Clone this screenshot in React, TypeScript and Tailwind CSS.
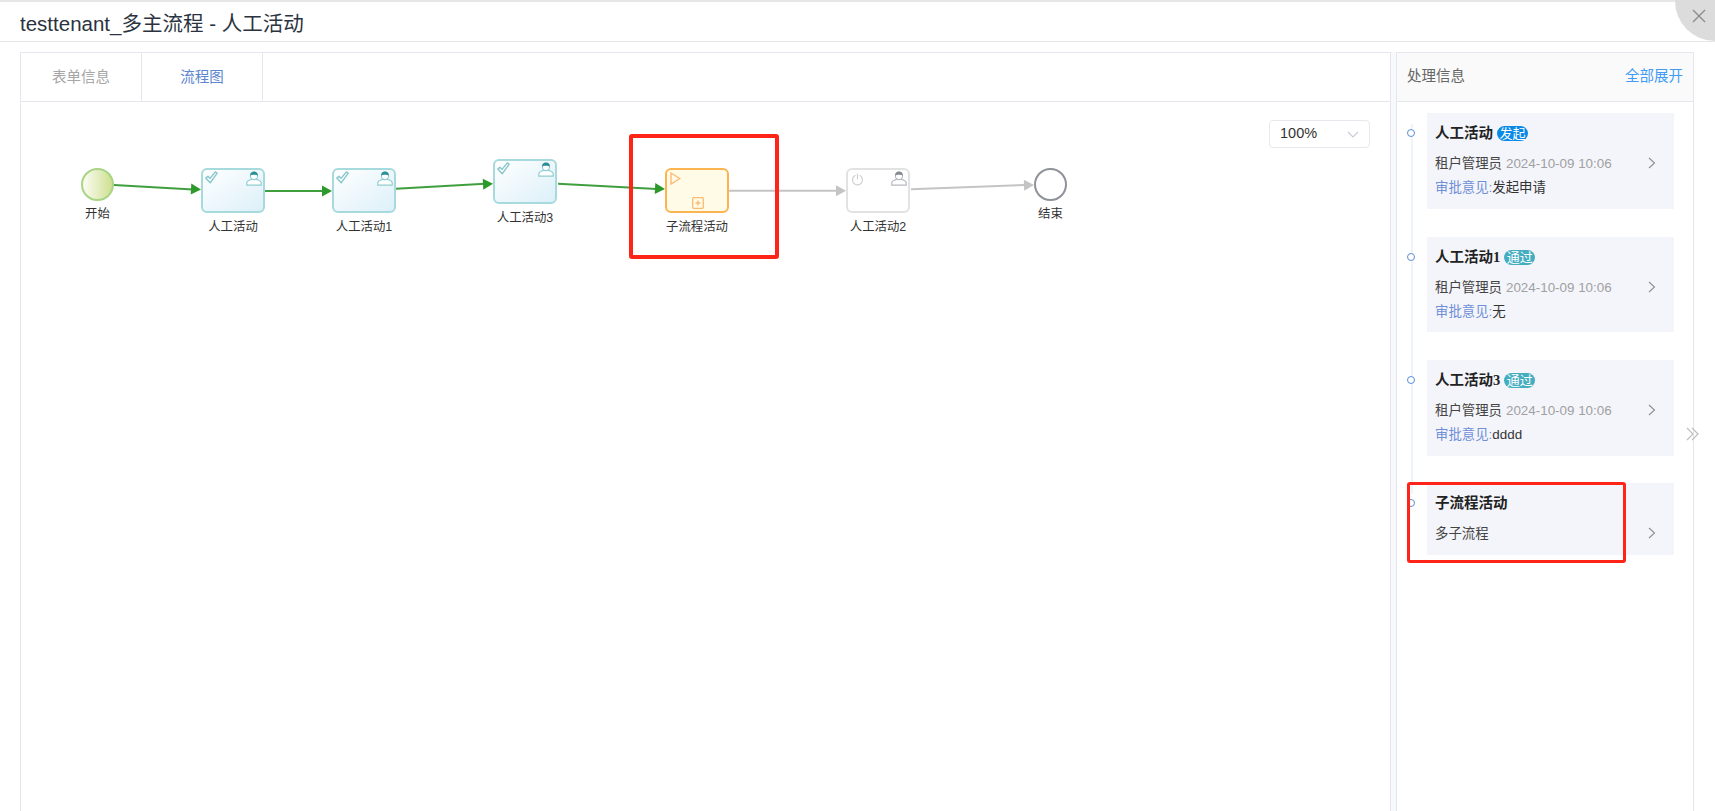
import { ReactNode } from 'react';

const font = { fontFamily: '"Liberation Sans", "Noto Sans CJK SC", sans-serif' };
const titleFont = { fontFamily: '"Liberation Serif", "Noto Sans CJK SC", serif' };

const CheckIcon = () => (
  <svg width="13" height="13" viewBox="0 0 13 13" fill="none" stroke="#86c6ca" strokeWidth="1.4" strokeLinejoin="round">
    <path d="M0.8 7 L3 5.2 L5 7.4 L10.4 0.9 L12.2 2.2 L5.2 11.8 Z" />
  </svg>
);

const UserIcon = ({ color, head }: { color: string; head: string }) => (
  <svg width="16" height="15" viewBox="0 0 16 15" fill="none">
    <path d="M0.8 14.2 V11.6 C0.8 9.8 3.4 9.4 5.6 8.2 H10.4 C12.6 9.4 15.2 9.8 15.2 11.6 V14.2 Z" stroke={color} strokeWidth="1.2" fill="#fff" />
    <circle cx="8" cy="5" r="3.6" stroke={color} strokeWidth="1.1" fill="#fff" />
    <path d="M4.2 4.8 C4 1.8 6 0.6 8 0.6 C10 0.6 12 1.8 11.8 4.8 C10.2 3.4 5.8 3.4 4.2 4.8 Z" fill={head} />
  </svg>
);

const PowerIcon = () => (
  <svg width="13" height="13" viewBox="0 0 13 13" fill="none" stroke="#cfcfcf" strokeWidth="1.2" strokeLinecap="round">
    <path d="M4 2.6 A5 5 0 1 0 9 2.6" />
    <path d="M6.5 1 V6" />
  </svg>
);

const TaskNode = ({ x, y, label, status }: { x: number; y: number; label: string; status: 'done' | 'active' | 'idle' }) => {
  const box =
    status === 'done'
      ? 'border-[#a6dadd] bg-gradient-to-br from-white to-[#dcf0f9]'
      : status === 'active'
        ? 'border-[#fbb450] bg-[#fffbe6]'
        : 'border-[#e2e2e2] bg-white';
  return (
    <div className="absolute w-[64px]" style={{ left: x, top: y }}>
      <div className={`relative h-[45px] w-[64px] rounded-[6px] border-2 ${box}`}>
        {status === 'done' && (
          <>
            <div className="absolute left-[2px] top-[1px]"><CheckIcon /></div>
            <div className="absolute right-[1px] top-[1px]"><UserIcon color="#8fcdd0" head="#2b8f96" /></div>
          </>
        )}
        {status === 'idle' && (
          <>
            <div className="absolute left-[3px] top-[3px]"><PowerIcon /></div>
            <div className="absolute right-[1px] top-[1px]"><UserIcon color="#b4b8c0" head="#858a93" /></div>
          </>
        )}
        {status === 'active' && (
          <>
            <svg className="absolute left-[3px] top-[2px]" width="11" height="13" viewBox="0 0 11 13" fill="none" stroke="#fbbb72" strokeWidth="1.4">
              <path d="M1 1 L9.8 6.5 L1 12 Z" />
            </svg>
            <svg className="absolute left-[25px] top-[27px]" width="12" height="12" viewBox="0 0 12 12" fill="none" stroke="#fbbb72" strokeWidth="1.3">
              <rect x="0.7" y="0.7" width="10.6" height="10.6" rx="1" />
              <path d="M3.5 6 H8.5 M6 3.5 V8.5" />
            </svg>
          </>
        )}
      </div>
      <div className="absolute left-[-30px] top-[51px] w-[124px] text-center text-[12.4px] leading-4 text-[#333]">{label}</div>
    </div>
  );
};

const EventNode = ({ x, y, label, kind }: { x: number; y: number; label: string; kind: 'start' | 'end' }) => (
  <div className="absolute h-[33px] w-[33px]" style={{ left: x, top: y }}>
    <div
      className={
        kind === 'start'
          ? 'h-[33px] w-[33px] rounded-full border-2 border-[#a8d585] bg-gradient-to-r from-[#fbfcf3] to-[#cfe08f]'
          : 'h-[33px] w-[33px] rounded-full border-[2.5px] border-[#8f9299] bg-white'
      }
    />
    <div className="absolute left-[-20px] top-[38px] w-[73px] text-center text-[12.4px] leading-4 text-[#333]">{label}</div>
  </div>
);

const Edge = ({ x1, y1, x2, y2, line, tip }: { x1: number; y1: number; x2: number; y2: number; line: string; tip: string }) => {
  const angle = (Math.atan2(y2 - y1, x2 - x1) * 180) / Math.PI;
  return (
    <g>
      <line x1={x1} y1={y1} x2={x2 - 8} y2={y2} stroke={line} strokeWidth="2" />
      <path d="M0 0 L-10 -5.5 V5.5 Z" fill={tip} transform={`translate(${x2} ${y2}) rotate(${angle})`} />
    </g>
  );
};

const Edges = () => (
  <svg className="absolute left-0 top-0" width="1370" height="240" fill="none">
    <Edge x1={93} y1={83} x2={180} y2={87.5} line="#3f9f3f" tip="#2b9a2b" />
    <Edge x1={244} y1={89} x2={311} y2={89} line="#3f9f3f" tip="#2b9a2b" />
    <Edge x1={375} y1={86.7} x2={472} y2={81.7} line="#3f9f3f" tip="#2b9a2b" />
    <Edge x1={537} y1={81.7} x2={644} y2={87} line="#3f9f3f" tip="#2b9a2b" />
    <Edge x1={708} y1={88.7} x2={825} y2={88.7} line="#c4c4c4" tip="#c4c4c4" />
    <Edge x1={890} y1={87.3} x2={1013} y2={83} line="#c4c4c4" tip="#c4c4c4" />
  </svg>
);

const Badge = ({ tone, children }: { tone: 'blue' | 'teal'; children: ReactNode }) => (
  <span
    className={`ml-[4px] inline-flex h-[15px] w-[31px] items-center justify-center rounded-full text-[13px] font-normal leading-none text-white ${tone === 'blue' ? 'bg-[#0a8ae6]' : 'bg-[#45adc0]'}`}
    style={font}
  >
    {children}
  </span>
);

type Step = { title: string; tone?: 'blue' | 'teal'; badge?: string; user: string; time?: string; note?: string; box: string };

const steps: Step[] = [
  { title: '人工活动', tone: 'blue', badge: '发起', user: '租户管理员', time: '2024-10-09 10:06', note: '发起申请', box: 'h-[96px] mb-[28px]' },
  { title: '人工活动1', tone: 'teal', badge: '通过', user: '租户管理员', time: '2024-10-09 10:06', note: '无', box: 'h-[95px] mb-[28px]' },
  { title: '人工活动3', tone: 'teal', badge: '通过', user: '租户管理员', time: '2024-10-09 10:06', note: 'dddd', box: 'h-[96px] mb-[27px]' },
  { title: '子流程活动', user: '多子流程', box: 'h-[72px]' },
];

const StepCard = ({ step }: { step: Step }) => (
  <div className={`relative ml-[30px] w-[247px] bg-[#f4f5fb] pl-[8px] pt-[9px] ${step.box}`}>
    <div className="absolute left-[-20px] top-[16px] h-[8px] w-[8px] rounded-full border-[1.5px] border-[#5b8fd8] bg-white" />
    <div className="flex h-[22px] items-center text-[14.5px] font-bold leading-none text-[#222]" style={titleFont}>
      {step.title}
      {step.badge && <Badge tone={step.tone ?? 'teal'}>{step.badge}</Badge>}
    </div>
    <div className="mt-[10px] flex h-[20px] items-center pr-[18px] text-[13.4px] text-[#444]">
      <span>{step.user}</span>
      {step.time && <span className="ml-[4px] text-[#a0a0a0]">{step.time}</span>}
      <svg className="-mt-[2px] ml-auto" width="8" height="12" viewBox="0 0 8 12" fill="none" stroke="#8e8e8e" strokeWidth="1.1">
        <path d="M1 1 L6.5 6 L1 11" />
      </svg>
    </div>
    {step.note && (
      <div className="mt-[4px] flex h-[20px] items-center text-[13.4px] text-[#333]">
        <span className="text-[#6f8fd8]">审批意见:</span>
        <span>{step.note}</span>
      </div>
    )}
  </div>
);

export default function App() {
  return (
    <div className="relative h-[811px] w-[1715px] overflow-hidden bg-white" style={font}>
      <div className="h-[42px] border-b border-t-2 border-b-[#e6e6ea] border-t-[#e6e6e6] pl-[20px] text-[20.5px] leading-[44px] text-[#2b3340]">
        testtenant_多主流程 - 人工活动
      </div>
      <div className="absolute right-0 top-0 h-[41px] w-[40px] rounded-bl-[40px] bg-[#dcdcdc]">
        <svg className="absolute left-[17px] top-[9px]" width="14" height="14" viewBox="0 0 14 14" stroke="#8c8c8c" strokeWidth="1.4">
          <path d="M1 1 L13 13 M13 1 L1 13" />
        </svg>
      </div>

      <div className="ml-[20px] mt-[10px] flex h-[759px] items-stretch">
        <div className="flex w-[1371px] flex-col border border-b-0 border-[#e6e6ee]">
          <div className="flex h-[49px] border-b border-[#e6e6ee] text-[14.5px] leading-[48px]">
            <div className="w-[121px] border-r border-[#e6e6ee] text-center text-[#a6a6a6]">表单信息</div>
            <div className="w-[121px] border-r border-[#e6e6ee] text-center text-[#5b85d0]">流程图</div>
          </div>
          <div className="relative flex-1">
            <Edges />
            <EventNode x={60} y={66} label="开始" kind="start" />
            <TaskNode x={180} y={66} label="人工活动" status="done" />
            <TaskNode x={311} y={66} label="人工活动1" status="done" />
            <TaskNode x={472} y={57} label="人工活动3" status="done" />
            <TaskNode x={644} y={66} label="子流程活动" status="active" />
            <TaskNode x={825} y={66} label="人工活动2" status="idle" />
            <EventNode x={1013} y={66} label="结束" kind="end" />

            <div className="absolute left-[1248px] top-[18px] flex h-[28px] w-[101px] items-center justify-between rounded-[4px] border border-[#e8e8ee] px-[10px] text-[14.5px] text-[#333]">
              100%
              <svg width="12" height="7" viewBox="0 0 12 7" fill="none" stroke="#c8ccd4" strokeWidth="1.1">
                <path d="M1 1 L6 6 L11 1" />
              </svg>
            </div>

            <div className="absolute left-[608px] top-[32px] h-[125px] w-[150px] rounded-[3px] border-4 border-[#ff2418]" />
          </div>
        </div>

        <div className="w-[5px] bg-[#f8f9fd]" />

        <div className="flex w-[298px] flex-col border border-b-0 border-[#e6e6ee]">
          <div className="flex h-[49px] items-center justify-between border-b border-[#e6e6ee] bg-[#fafafa] px-[10px] text-[14.5px]">
            <span className="text-[#666]">处理信息</span>
            <span className="text-[#3f9bf5]">全部展开</span>
          </div>
          <div className="relative flex-1 pt-[11px]">
            <div className="absolute left-[14px] top-[22px] h-[370px] w-[2px] bg-[#eef3fc]" />
            {steps.map((s) => (
              <StepCard key={s.title} step={s} />
            ))}
            <div className="absolute left-[10px] top-[380px] h-[81px] w-[219px] rounded-[3px] border-[3.5px] border-[#ff2418]" />
          </div>
        </div>
      </div>

      <svg className="absolute left-[1686px] top-[427px]" width="13" height="14" viewBox="0 0 13 14" fill="none" stroke="#bdbdbd" strokeWidth="1.2">
        <path d="M1 1 L7 7 L1 13 M6 1 L12 7 L6 13" />
      </svg>
    </div>
  );
}
